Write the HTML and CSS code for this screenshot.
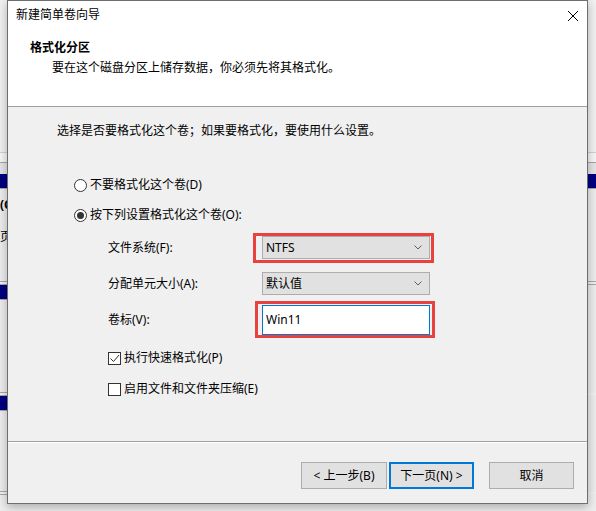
FILE: index.html
```html
<!DOCTYPE html>
<html lang="zh-CN">
<head>
<meta charset="utf-8">
<title>新建简单卷向导</title>
<link rel="stylesheet" href="styles.css">
</head>
<body>
<div class="desk">
  <div class="bg-top"></div>
  <div class="ln ln-light"></div>
  <div class="bg-gap9"></div>
  <div class="ln"></div>
  <div class="bg-gap11"></div>
  <div class="navy"></div>
  <div class="ln"></div>
  <div class="bg-area a1">
    <div class="bg-text bold">(C:)</div>
    <div class="bg-text t2">页面</div>
  </div>
  <div class="ln"></div>
  <div class="bg-gap2"></div>
  <div class="ln"></div>
  <div class="navy left-only"></div>
  <div class="ln left-only"></div>
  <div class="bg-area a2"></div>
  <div class="ln left-only"></div>
  <div class="bg-gap2"></div>
  <div class="ln left-only"></div>
  <div class="navy left-only"></div>
  <div class="ln left-only"></div>
  <div class="bg-area a3"></div>
  <div class="ln left-only"></div>
  <div class="bg-gap2"></div>
  <div class="ln left-only"></div>
</div>

<div class="dialog">
  <div class="titlebar">
    <span class="title">新建简单卷向导</span>
    <svg class="close" width="10" height="10" viewBox="0 0 10 10"><path d="M0 0L10 10M10 0L0 10" stroke="#000" stroke-width="1" fill="none"/></svg>
  </div>
  <div class="header">
    <div class="h-title">格式化分区</div>
    <div class="h-sub">要在这个磁盘分区上储存数据，你必须先将其格式化。</div>
  </div>
  <div class="content">
    <div class="intro">选择是否要格式化这个卷；如果要格式化，要使用什么设置。</div>
    <div class="radio r1"><span class="rb"></span>不要格式化这个卷(D)</div>
    <div class="radio r2"><span class="rb on"></span>按下列设置格式化这个卷(O):</div>
    <div class="fields">
      <div class="row row1">
        <span class="lbl">文件系统(F):</span>
        <div class="combo hl hl-a">NTFS<svg class="chev" width="8" height="5" viewBox="0 0 8 5"><path d="M0.5 0.5L4 4L7.5 0.5" stroke="#606060" fill="none"/></svg></div>
      </div>
      <div class="row row2">
        <span class="lbl">分配单元大小(A):</span>
        <div class="combo">默认值<svg class="chev" width="8" height="5" viewBox="0 0 8 5"><path d="M0.5 0.5L4 4L7.5 0.5" stroke="#606060" fill="none"/></svg></div>
      </div>
      <div class="row row3">
        <span class="lbl">卷标(V):</span>
        <div class="textbox hl hl-b">Win11</div>
      </div>
    </div>
    <div class="check c1"><span class="cb"><svg width="11" height="11" viewBox="0 0 11 11"><path d="M1.5 5.5L4.5 8.5L10 2" stroke="#333" stroke-width="1" fill="none"/></svg></span>执行快速格式化(P)</div>
    <div class="check c2"><span class="cb"></span>启用文件和文件夹压缩(E)</div>
  </div>
  <div class="footer">
    <button class="btn back">&lt; 上一步(B)</button>
    <button class="btn next">下一页(N) &gt;</button>
    <button class="btn cancel">取消</button>
  </div>
</div>
</body>
</html>
```
FILE: styles.css
```css
* { box-sizing: border-box; }
html, body { margin: 0; padding: 0; }
body {
  width: 596px;
  height: 511px;
  overflow: hidden;
  position: relative;
  background: #ededed;
  font-family: "Noto Sans", "Noto Sans CJK SC", sans-serif;
  font-size: 12px;
  line-height: 16px;
  color: #000;
}

/* background window */
.desk { display: flex; flex-direction: column; background: #ececec; }
.bg-top { height: 152px; background: #f0f0f0; }
.ln { height: 1px; background: #a6a6a6; }
.ln-light { background: #d0d0d0; }
.bg-gap9 { height: 9px; background: #f5f5f5; }
.bg-gap11 { height: 11px; background: #e4e4e4; }
.bg-gap2 { height: 2px; background: #f0f0f0; }
.navy { height: 14px; background: #000080; }
.left-only { width: 12px; }
.bg-area { background: #ececec; }
.a1 { height: 92px; padding-top: 8px; }
.a2 { height: 92px; }
.a3 { height: 80px; }
.bg-text { white-space: nowrap; }
.bold { font-weight: bold; }
.t2 { margin-top: 16px; }

/* dialog */
.dialog {
  position: absolute;
  left: 7px;
  top: 0;
  width: 581px;
  height: 504px;
  border: 1px solid #6e6e6e;
  background: #f0f0f0;
  box-shadow: 0 3px 9px rgba(0, 0, 0, 0.28);
  display: flex;
  flex-direction: column;
}
.titlebar {
  height: 30px;
  background: #fff;
  display: flex;
  align-items: center;
  justify-content: space-between;
  padding: 0 9px 2px 8px;
}
.close { display: block; margin-top: 2px; }
.header {
  height: 76px;
  background: #fff;
  border-bottom: 1px solid #a0a0a0;
  padding: 9px 0 0 22px;
}
.h-title { font-weight: bold; }
.h-sub { margin-top: 4px; padding-left: 22px; }

.content {
  height: 334px;
  padding: 16px 0 0 49px;
}
.radio { display: flex; align-items: center; margin-left: 17px; height: 16px; }
.r1 { margin-top: 38px; }
.r2 { margin-top: 14px; }
.rb {
  width: 13px; height: 13px;
  border: 1px solid #333;
  border-radius: 50%;
  background: #fff;
  margin-right: 3px;
  display: flex; align-items: center; justify-content: center;
}
.rb.on::after {
  content: "";
  width: 7px; height: 7px;
  border-radius: 50%;
  background: #333;
}

.fields { margin-left: 51px; margin-top: 13px; display: flex; flex-direction: column; }
.row { display: flex; align-items: center; }
.row2 { margin-top: 13px; }
.row3 { margin-top: 10px; }
.lbl { width: 154px; }
.combo {
  position: relative;
  width: 168px;
  height: 23px;
  background: #e1e1e1;
  border: 1px solid #adadad;
  padding-left: 3px;
  display: flex;
  align-items: center;
  justify-content: space-between;
  padding-right: 7px;
}
.chev { display: block; }
.textbox {
  position: relative;
  width: 168px;
  height: 30px;
  background: #fff;
  border: 1px solid #0078d7;
  padding-left: 3px;
  display: flex;
  align-items: center;
}
.hl::after {
  content: "";
  position: absolute;
  border: 3px solid #e8413f;
}
.hl-a::after { left: -10px; right: -5px; top: -4px; bottom: -5px; }
.hl-b::after { left: -8px; right: -6px; top: -5px; bottom: -4px; }

.check { display: flex; align-items: center; margin-left: 51px; height: 16px; }
.c1 { margin-top: 15px; }
.c2 { margin-top: 15px; }
.cb {
  width: 13px; height: 13px;
  border: 1px solid #333;
  background: #fff;
  margin-right: 3px;
  display: flex; align-items: center; justify-content: center;
}
.cb svg { display: block; }

.footer {
  flex: 1;
  border-top: 1px solid #a0a0a0;
  box-shadow: inset 0 1px #fff;
  display: flex;
  justify-content: flex-end;
  align-items: flex-start;
  padding: 20px 13px 0 0;
}
.btn {
  height: 27px;
  width: 85px;
  background: #e1e1e1;
  border: 1px solid #adadad;
  font-family: inherit;
  font-size: 12px;
  line-height: 16px;
  color: #000;
  padding: 0;
  margin: 0;
}
.back { width: 86px; margin-right: 2px; }
.next { border: 2px solid #0078d7; margin-right: 15px; }
```
